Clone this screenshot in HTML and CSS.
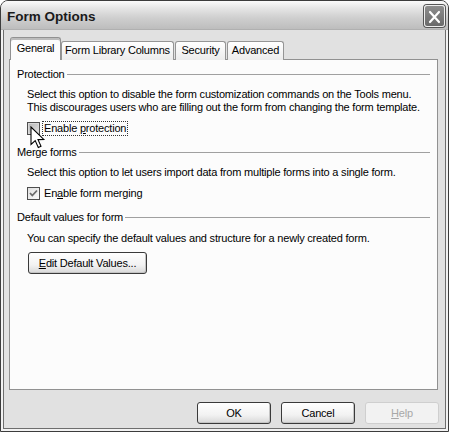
FILE: index.html
```html
<!DOCTYPE html>
<html>
<head>
<meta charset="utf-8">
<link rel="stylesheet" href="styles.css">
</head>
<body>
<div class="window">
  <div class="titlebar">
    <span class="title">Form Options</span>
    <span class="close">
      <svg width="21" height="22" viewBox="0 0 21 22">
        <path d="M5.5 5.5 L15.5 16.5 M15.5 5.5 L5.5 16.5" stroke="#fff" stroke-width="2.4" stroke-linecap="round" fill="none"/>
      </svg>
    </span>
  </div>
  <div class="client">
    <div class="tabs">
      <div class="tab active t1">General</div>
      <div class="tab t2">Form Library Columns</div>
      <div class="tab t3">Security</div>
      <div class="tab t4">Advanced</div>
    </div>
    <div class="panel">
      <div class="group g1">
        <div class="legend"><span>Protection</span><i></i></div>
        <p class="desc">Select this option to disable the form customization commands on the Tools menu.<br>This discourages users who are filling out the form from changing the form template.</p>
        <div class="check c1">
          <span class="box hot"></span>
          <span class="label focus">Enable <u>p</u>rotection</span>
          <svg class="cursor" width="16" height="23" viewBox="0 0 16 23">
            <path d="M1 1 L1 18.5 L5.2 14.6 L8.3 21.5 L11 20.3 L8 13.6 L13.8 13.4 Z" fill="#fff" stroke="#000" stroke-width="1.1" stroke-linejoin="miter"/>
          </svg>
        </div>
      </div>
      <div class="group g2">
        <div class="legend"><span>Merge forms</span><i></i></div>
        <p class="desc">Select this option to let users import data from multiple forms into a single form.</p>
        <div class="check c2">
          <span class="box">
            <svg width="11" height="11" viewBox="0 0 11 11"><path d="M2 5 L4.3 7.5 L9 2.5" stroke="#6a6a6a" stroke-width="1.8" fill="none"/></svg>
          </span>
          <span class="label">En<u>a</u>ble form merging</span>
        </div>
      </div>
      <div class="group g3">
        <div class="legend"><span>Default values for form</span><i></i></div>
        <p class="desc">You can specify the default values and structure for a newly created form.</p>
        <button class="btn wide"><u>E</u>dit Default Values...</button>
      </div>
    </div>
    <div class="buttons">
      <button class="btn">OK</button>
      <button class="btn">Cancel</button>
      <button class="btn disabled"><u>H</u>elp</button>
    </div>
  </div>
</div>
</body>
</html>
```

FILE: styles.css
```css
html, body {
  margin: 0;
  padding: 0;
  background: #ffffff;
}
.window {
  width: 449px;
  height: 432px;
  box-sizing: border-box;
  border: 1px solid #3c3c3c;
  border-radius: 8px 8px 0 0;
  background: #e1e1e1;
  display: flex;
  flex-direction: column;
  overflow: hidden;
  font-family: "Liberation Sans", Arial, sans-serif;
  font-size: 11px;
  letter-spacing: -0.2px;
  color: #000;
  position: relative;
}
.titlebar {
  height: 28px;
  flex: none;
  display: flex;
  align-items: center;
  justify-content: space-between;
  padding: 0 3px 0 6px;
  background: linear-gradient(#fbfbfb 0%, #e6e6e6 25%, #cfcfcf 60%, #bdbdbd 100%);
  border-bottom: 1px solid #b0b0b0;
}
.title {
  font-weight: bold;
  font-size: 13.5px;
  letter-spacing: 0;
  color: #1a1a1a;
  padding-top: 2px;
}
.close {
  width: 21px;
  height: 22px;
  box-sizing: border-box;
  border: 1px solid #eeeeee;
  border-radius: 3px;
  background: linear-gradient(#8e8e8e, #6a6a6a);
  box-shadow: 0 0 0 1px #555;
  display: flex;
  margin-top: 1px;
}
.client {
  flex: 1;
  display: flex;
  flex-direction: column;
  padding: 7px 8px 0 6px;
  border-left: 2px solid #f2f2f2;
  border-right: 2px solid #f2f2f2;
  border-bottom: 2px solid #f2f2f2;
  box-shadow: inset 1px 0 0 #6e6e6e, inset -1px 0 0 #6e6e6e, inset 0 -1px 0 #6e6e6e;
}
.tabs {
  display: flex;
  align-items: flex-end;
  height: 23px;
  padding-left: 1px;
  position: relative;
  z-index: 1;
  margin-bottom: -1px;
}
.tab {
  height: 19px;
  box-sizing: border-box;
  padding-top: 2px;
  text-align: center;
  border: 1px solid #959595;
  border-bottom: none;
  border-radius: 3px 3px 0 0;
  background: linear-gradient(#ffffff, #ececec);
  color: #000;
  white-space: nowrap;
}
.tab.active {
  height: 23px;
  padding-top: 4px;
  background: #fcfcfc;
  border-color: #919191;
  box-shadow: inset 0 2px 0 #bcbcbc;
}
.t1 { width: 51px; }
.t2 { width: 113px; }
.t3 { width: 51px; margin-left: 1px; }
.t4 { width: 57px; margin-left: 1px; }
.panel {
  height: 331px;
  flex: none;
  box-sizing: border-box;
  background: #fcfcfc;
  border: 1px solid #919191;
  padding: 8px 7px 0 7px;
}
.legend {
  display: flex;
  align-items: center;
  height: 13px;
  line-height: 13px;
}
.legend i {
  flex: 1;
  height: 0;
  border-top: 1px solid #a0a0a0;
  margin-left: 2px;
}
.desc {
  margin: 0;
  padding-left: 10px;
  line-height: 13px;
}
.g1 .desc { margin-top: 7px; }
.check {
  display: flex;
  align-items: center;
  margin-left: 10px;
  height: 15px;
  position: relative;
}
.c1 { margin-top: 7px; }
.c2 { margin-top: 7px; }
.box {
  width: 13px;
  height: 13px;
  box-sizing: border-box;
  border: 1px solid #4e4e4e;
  background: linear-gradient(135deg, #e0e0e0, #f8f8f8);
  display: flex;
  align-items: center;
  justify-content: center;
  margin-right: 2px;
}
.box.hot {
  background: linear-gradient(135deg, #b4b4b4, #e4e4e4);
  box-shadow: inset 0 0 0 1px #d8d8d8;
}
.label {
  padding: 0 1px;
  line-height: 13px;
  border: 1px dotted transparent;
}
.label.focus {
  border: 1px dotted #333;
}
.cursor {
  position: absolute;
  left: 3px;
  top: 5px;
}
.g2 { margin-top: 10px; }
.g2 .desc { margin-top: 7px; }
.g3 { margin-top: 10px; }
.g3 .desc { margin-top: 8px; }
.btn {
  font-family: "Liberation Sans", Arial, sans-serif;
  font-size: 11px;
  letter-spacing: -0.2px;
  color: #000;
  height: 22px;
  width: 74px;
  box-sizing: border-box;
  border: 1px solid #3a3a3a;
  border-radius: 3px;
  background: linear-gradient(#ffffff 0%, #f2f2f2 60%, #d8d8d8 100%);
  box-shadow: inset -1px -1px 0 #c4c4c4;
  padding: 0;
}
.btn.wide {
  display: block;
  width: 119px;
  margin: 7px 0 0 11px;
  text-align: center;
}
.btn.disabled {
  color: #a8a8a8;
  border-color: #cfcfcf;
  background: #f2f2f2;
  box-shadow: none;
}
.buttons {
  display: flex;
  justify-content: flex-end;
  gap: 10px;
  padding-top: 12px;
  margin-right: -1px;
}
```
